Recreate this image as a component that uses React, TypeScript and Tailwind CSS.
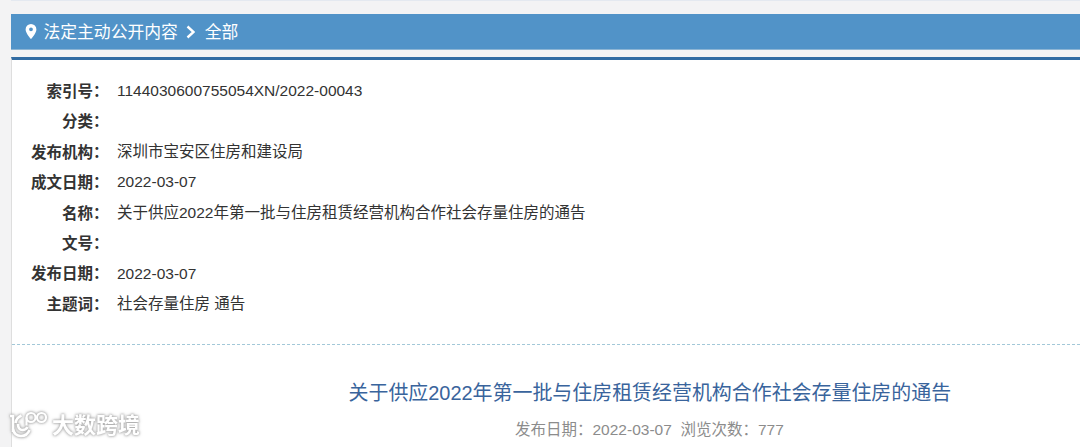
const rows = [
  { label: '索引号', value: '1144030600755054XN/2022-00043' },
  { label: '分类', value: '' },
  { label: '发布机构', value: '深圳市宝安区住房和建设局' },
  { label: '成文日期', value: '2022-03-07' },
  { label: '名称', value: '关于供应2022年第一批与住房租赁经营机构合作社会存量住房的通告' },
  { label: '文号', value: '' },
  { label: '发布日期', value: '2022-03-07' },
  { label: '主题词', value: '社会存量住房 通告' },
];

const Breadcrumb = () => (
  <nav className="flex h-9 items-center border-b border-[#8db5d4] bg-[#5193c8] pl-[14px] pt-px text-[16.8px] text-white">
    <svg className="mb-px h-[15px] w-3" viewBox="0 0 12 15" fill="currentColor">
      <path fillRule="evenodd" d="M6 0a5.4 5.4 0 0 0-5.4 5.4C.6 9.200 6 15 6 15s5.4-5.800 5.4-9.600A5.4 5.4 0 0 0 6 0Zm0 3.400a1.900 1.900 0 1 1 0 3.800 1.900 1.900 0 0 1 0-3.800Z" />
    </svg>
    <span className="ml-[6.500px] pt-px">法定主动公开内容</span>
    <svg className="ml-2 h-[14px] w-[9px]" viewBox="0 0 9 14" fill="none" stroke="currentColor" strokeWidth="2.4">
      <path d="M1.500 1.500 7.500 7l-6 5.500" />
    </svg>
    <span className="ml-[10px] pt-px">全部</span>
  </nav>
);

const Watermark = () => (
  <div className="absolute left-[9px] top-[411px] flex items-center text-white [filter:drop-shadow(0_0_1px_#aaa)_drop-shadow(0_0_1.5px_#bbb)]">
    <svg className="h-[30px] w-10" viewBox="0 0 40 30" fill="none" stroke="currentColor" strokeWidth="2.6">
      <path d="M1 5h3v16" />
      <path d="M12.500 4.500C9 6 7 8 6.500 12" />
      <path d="M9 13c0 4 2 6 4.500 6 2.500 0 4-1 5-3" />
      <path d="M4 18c1 5 4 7 8 7s7-2 8.500-6" />
      <path d="M17.500 14.500V6.500" strokeWidth="2.200" />
      <circle cx="22" cy="6.500" r="4.500" strokeWidth="2.200" />
      <circle cx="32.500" cy="6.500" r="4.500" strokeWidth="2.200" />
    </svg>
    <span className="ml-[3px] text-[22px] font-bold leading-[30px]">大数跨境</span>
  </div>
);

export default function App() {
  return (
    <div className="relative h-[447px] w-full overflow-hidden whitespace-nowrap bg-[#f3f3f4] font-['Liberation_Sans','Noto_Sans_CJK_SC',sans-serif] text-[#333]">
      <div className="ml-[11px] h-[14px] border-t border-[#e4e9f0]" />
      <div className="ml-[11px]">
        <Breadcrumb />
        <main className="mt-[7px] h-[390px] border-l border-t-[3px] border-l-[#dedede] border-t-[#316ca3] bg-white">
          <dl className="h-[285px] border-b border-dashed border-[#a3c8d8] pt-4 text-[15.5px] leading-[30.45px]">
            {rows.map(({ label, value }) => (
              <div key={label} className="flex h-[30.45px]">
                <dt className="w-[96.5px] pt-[0.8px] text-right font-bold">{label}：</dt>
                <dd className="ml-[8.5px]">{value}</dd>
              </div>
            ))}
          </dl>
          <div className="ml-[336.5px] mt-[34px] text-[19.95px] leading-[28px] text-[#39649c]">
            关于供应2022年第一批与住房租赁经营机构合作社会存量住房的通告
          </div>
          <div className="ml-[503px] mt-[11px] whitespace-pre text-[15.5px] leading-6 text-[#8c8c8c]">
            {'发布日期：2022-03-07  浏览次数：777'}
          </div>
        </main>
      </div>
      <Watermark />
    </div>
  );
}
